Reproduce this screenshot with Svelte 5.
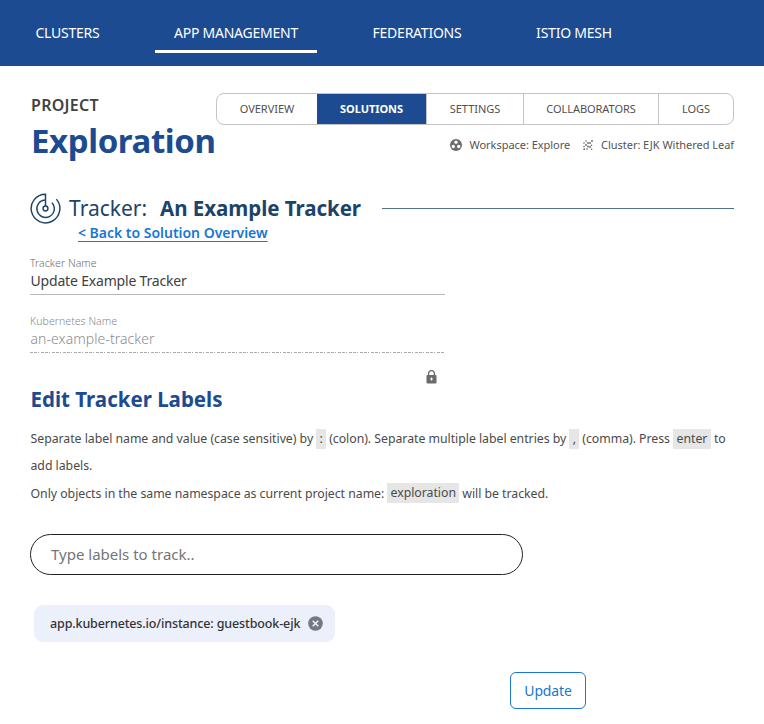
<script>
  const nav = [
    { label: 'CLUSTERS', w: 103 },
    { label: 'APP MANAGEMENT', w: 162, active: true },
    { label: 'FEDERATIONS', w: 128 },
    { label: 'ISTIO MESH', w: 114 },
  ];
  const tabs = [
    { label: 'OVERVIEW', w: 100 },
    { label: 'SOLUTIONS', w: 109, active: true },
    { label: 'SETTINGS', w: 97 },
    { label: 'COLLABORATORS', w: 135 },
    { label: 'LOGS', w: 75 },
  ];
</script>

<div class="page">
  <nav>
    {#each nav as item}
      <a class:active={item.active} style:width="{item.w}px"><span>{item.label}</span></a>
    {/each}
  </nav>

  <header>
    <div class="project">
      <div class="kicker"><span>PROJECT</span></div>
      <h1><span>Exploration</span></h1>
    </div>
    <div class="side">
      <div class="tabs">
        {#each tabs as tab}
          <div class="tab" class:on={tab.active} style:width="{tab.w}px"><span>{tab.label}</span></div>
        {/each}
      </div>
      <div class="meta">
        <svg width="12" height="12" viewBox="0 0 24 24"><circle cx="12" cy="12" r="12" fill="#6c6c6c" /><g fill="#fff"><circle cx="12" cy="6.4" r="3.3" /><circle cx="6.6" cy="15" r="3.3" /><circle cx="17.4" cy="15" r="3.3" /></g></svg>
        <span class="ws">Workspace: Explore</span>
        <svg width="10" height="10" viewBox="0 0 10 10" fill="#666"><circle cx="3" cy="1" r=".8" /><circle cx="9" cy="1" r=".9" /><circle cx="1" cy="3" r=".8" /><circle cx="5" cy="3" r=".9" /><circle cx="7" cy="3" r=".9" /><circle cx="3" cy="5" r=".9" /><circle cx="8.5" cy="5.3" r=".8" /><circle cx="1" cy="6.5" r=".8" /><circle cx="5" cy="6.5" r=".9" /><circle cx="7" cy="7" r=".9" /><circle cx="1.2" cy="9.2" r=".9" /><circle cx="4" cy="9" r=".8" /><circle cx="8.6" cy="9.2" r=".8" /></svg>
        <span class="cl">Cluster: EJK Withered Leaf</span>
      </div>
    </div>
  </header>

  <main>
    <div class="title">
      <svg width="31" height="31" viewBox="0 0 32 32" fill="none" stroke="#1c4468" stroke-width="1.5">
        <path d="M16 13.5V1.2A14.8 14.8 0 1 0 27.2 6.3" />
        <path d="M16 7.2A9 9 0 1 0 22.6 10" />
        <circle cx="16" cy="16" r="2.5" />
      </svg>
      <span class="t1">Tracker:</span>
      <span class="t2">An Example Tracker</span>
      <i></i>
    </div>
    <a class="back"><span>&lt; Back to Solution Overview</span></a>

    <div class="field">
      <div class="label"><span>Tracker Name</span></div>
      <div class="value"><span>Update Example Tracker</span></div>
    </div>
    <div class="field disabled">
      <div class="label"><span>Kubernetes Name</span></div>
      <div class="value"><span>an-example-tracker</span></div>
      <svg class="dash" width="415" height="1"><path d="M0 .5H415" stroke="#aaa" stroke-dasharray="3 1 3 1 1 2" /></svg>
    </div>
    <div class="lock">
      <svg width="11" height="14" viewBox="0 0 11 14"><path d="M2.6 6V3.6a2.9 2.9 0 0 1 5.8 0V6" fill="none" stroke="#666" stroke-width="1.2" /><rect x=".5" y="5" width="10" height="8.5" rx="1" fill="#6b6b6b" /><path d="M4.1 9h2.8M5.5 7.6v2.8" stroke="#fff" stroke-width="1.2" /></svg>
    </div>

    <h2><span>Edit Tracker Labels</span></h2>
    <div class="help">
      <p><span>Separate label name and value (case sensitive) by</span><code style:width="10px">:</code><span>(colon). Separate multiple label entries by</span><code style:width="10px">,</code><span>(comma). Press</span><code style:width="38px">enter</code><span>to</span></p>
      <p><span>add labels.</span></p>
      <p><span>Only objects in the same namespace as current project name:</span><code style:width="72px">exploration</code><span>will be tracked.</span></p>
    </div>

    <input placeholder="Type labels to track.." />
    <div class="chip">
      <span>app.kubernetes.io/instance: guestbook-ejk</span>
      <svg width="15" height="15" viewBox="0 0 14 14"><circle cx="7" cy="7" r="6.8" fill="#747980" /><path d="M4.4 4.4l5.2 5.2M9.6 4.4L4.4 9.6" stroke="#ecf0fa" stroke-width="1.5" /></svg>
    </div>
    <button><span>Update</span></button>
  </main>
</div>

<style>
  :global(body) { margin: 0; background: #fff; }
  .page { width: 764px; height: 724px; overflow: hidden; background: #fff; font-family: "Noto Sans", sans-serif; color: #444; white-space: nowrap; }
  .page * { box-sizing: border-box; }
  nav { height: 66px; background: #1d4b91; display: flex; gap: 36px; padding: 13px 0 0 16px; }
  nav a { height: 40px; color: #fff; font-size: 14px; line-height: 40px; text-align: center; letter-spacing: -.23px; }
  nav a.active { border-bottom: 3px solid #fff; }
  header { display: flex; height: 106px; padding-left: 31px; }
  .project { width: 185px; padding-top: 28px; }
  .kicker { font-size: 16px; line-height: 22px; font-weight: 600; color: #424242; letter-spacing: .3px; }
  h1 { margin: 0; padding-top: 2px; font-size: 33px; line-height: 46px; font-weight: 700; color: #1d4b91; letter-spacing: -.4px; }
  .side { width: 518px; padding-top: 27px; }
  .tabs { display: flex; height: 32px; border: 1px solid #c4c4c4; border-radius: 8px; overflow: hidden; }
  .tab { flex: none; height: 30px; line-height: 30px; font-size: 11px; text-align: center; border-left: 1px solid #c4c4c4; color: #505050; letter-spacing: -.04px; }
  .tab:first-child { border-left: 0; }
  .tab.on { border-left: 0; background: #1d4b91; color: #fff; font-weight: 700; }
  .meta { display: flex; align-items: center; justify-content: flex-end; height: 39px; font-size: 11px; color: #545454; letter-spacing: -.04px; }
  .ws { margin: 0 13px 0 8px; }
  .cl { margin-left: 8px; }
  main { padding-left: 30px; }
  .title { display: flex; align-items: center; height: 50px; margin-top: 11px; color: #1c4468; font-size: 21px; margin-right: 30px; }
  .t1 { margin-left: 8px; }
  .t2 { margin-left: 13px; font-weight: 700; font-size: 20.5px; letter-spacing: -.04px; }
  .title i { flex: 1; height: 1px; margin-left: 21px; background: #50718f; }
  .back { display: block; margin: -10px 0 0 48px; height: 20px; line-height: 20px; font-size: 14px; font-weight: 600; letter-spacing: -.02px; color: #1976d2; text-decoration: underline; text-decoration-thickness: 1px; text-underline-offset: 3px; }
  .field { width: 415px; height: 58px; padding-top: 13px; }
  .label { height: 14px; line-height: 14px; font-size: 10.5px; color: #6c6c6c; font-weight: 300; letter-spacing: .06px; }
  .value { height: 25px; line-height: 22px; font-size: 14px; color: #404040; letter-spacing: -.18px; border-bottom: 1px solid #b8b8b8; padding-left: .5px; }
  .disabled .value { border: 0; height: 24px; color: #8c8c8c; letter-spacing: .06px; font-weight: 300; }
  .disabled .label { color: #888; }
  .dash { display: block; }
  .lock { width: 407px; height: 26px; display: flex; justify-content: flex-end; padding-top: 11px; }
  h2 { margin: 0; padding-left: .5px; height: 40px; line-height: 28px; font-size: 20.5px; font-weight: 700; color: #1d4b91; }
  .help { font-size: 12.3px; color: #4a4a4a; letter-spacing: -.03px; padding-left: .5px; }
  p { display: flex; align-items: center; margin: 0; height: 27.4px; }
  p:nth-child(2) { padding-bottom: 1.5px; }
  code { font: inherit; height: 20px; line-height: 20px; background: #e6e6e6; margin: 0 3px; text-align: center; }
  input { display: block; width: 493px; height: 41px; margin-top: 27px; border: 1px solid #222; border-radius: 21px; padding: 0 20px 2px; font: 15px "Noto Sans", sans-serif; }
  input::placeholder { color: #757575; opacity: 1; }
  .chip { display: flex; align-items: center; gap: 8px; width: 301px; height: 37px; margin: 30px 0 0 4px; padding-left: 16px; background: #ecf0fa; border-radius: 9px; color: #333; font-size: 12.5px; font-weight: 500; letter-spacing: -.13px; }
  button { display: block; width: 76px; height: 37px; margin: 30px 0 0 480px; padding: 0; border: 1px solid #1976d2; border-radius: 6px; background: #fff; color: #1976d2; font: 14px "Noto Sans", sans-serif; letter-spacing: -.15px; }
</style>
